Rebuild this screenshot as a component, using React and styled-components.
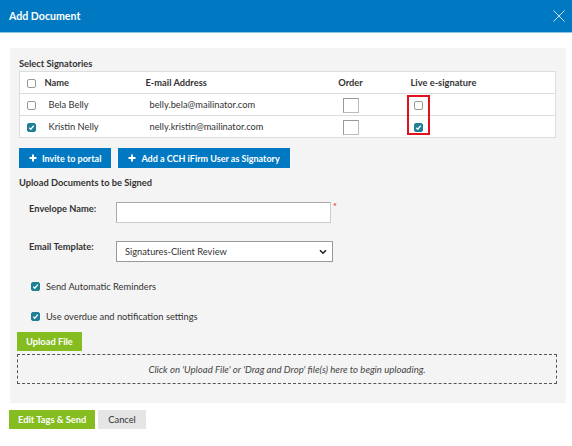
import React from 'react';
import styled, { createGlobalStyle } from 'styled-components';

const GlobalStyle = createGlobalStyle`
	html, body {
		margin: 0;
		padding: 0;
		background: #fff;
		font-family: 'Lato', 'Open Sans', sans-serif;
		font-size: 9.3px;
		color: #333;
	}
`;

const Modal = styled.div`
	width: 572px;
	height: 446px;
	background: #fff;
	overflow: hidden;
`;

const Header = styled.div`
	height: 32px;
	background: #0079c2;
	border-bottom: 1px solid #8cc4e8;
	display: flex;
	align-items: center;
	justify-content: space-between;
	padding: 0 7px 0 9px;
	color: #fff;

	h1 {
		margin: 0;
		font-size: 10.6px;
		font-weight: 700;
	}
`;

const Close = styled.svg`
	width: 12px;
	height: 12px;
	display: block;
`;

const Body = styled.div`
	padding: 15px 6px 0 10px;
`;

const Panel = styled.div`
	background: #f4f4f4;
	padding: 8px 10px 19px 9px;
`;

const SectionTitle = styled.div`
	font-weight: 700;
	color: #333;
	height: 15px;
	line-height: 15px;
`;

const Table = styled.table`
	width: 537px;
	border-collapse: collapse;
	background: #fff;
	border: 1px solid #ddd;
	table-layout: fixed;

	th, td {
		height: 21px;
		line-height: 21px;
		padding: 0;
		box-sizing: border-box;
	}

	th {
		font-weight: 700;
		text-align: left;
		color: #333;
	}

	td {
		border-top: 1px solid #ddd;
	}
`;

const Cell = styled.td`
	padding-left: ${p => p.$pl || 0}px !important;
	text-align: ${p => p.$center ? 'center' : 'left'};
`;

const Head = styled.th`
	padding-left: ${p => p.$pl || 0}px !important;
	text-align: ${p => p.$center ? 'center' : 'left'} !important;
`;

const Check = styled.span`
	display: inline-block;
	vertical-align: middle;
	width: 9px;
	height: 9px;
	box-sizing: border-box;
	border: 1px solid ${p => p.$on ? '#1f7f95' : '#999'};
	border-radius: 2px;
	background: ${p => p.$on ? '#1f7f95' : '#fff'};
	position: relative;

	svg {
		position: absolute;
		left: 0;
		top: 0;
		width: 7px;
		height: 7px;
	}
`;

const OrderBox = styled.span`
	display: inline-block;
	vertical-align: middle;
	width: 16px;
	height: 15px;
	box-sizing: border-box;
	border: 1px solid #999;
	border-bottom-color: #bbb;
	border-right-color: #bbb;
	background: #fff;
`;

const Highlight = styled.div`
	position: absolute;
	left: -7px;
	top: -6px;
	width: 23px;
	height: 40px;
	box-sizing: border-box;
	border: 2px solid #e3111b;
`;

const LiveCell = styled.div`
	position: relative;
	display: inline-block;
	vertical-align: middle;
	line-height: 0;
`;

const ButtonRow = styled.div`
	display: flex;
	gap: 7px;
	margin: 10px 0 7px;
`;

const BlueButton = styled.button`
	height: 20px;
	border: none;
	background: #0079c2;
	color: #fff;
	font-family: inherit;
	font-size: 9px;
	font-weight: 700;
	padding: 0 ${p => p.$px || 12}px;
	display: flex;
	align-items: center;
	gap: 5px;
	border-radius: 0;
`;

const FormRow = styled.div`
	display: flex;
	align-items: flex-start;
	padding-left: 10px;
	margin-top: ${p => p.$mt || 0}px;
`;

const Label = styled.div`
	width: 87px;
	font-weight: 700;
	padding-top: ${p => p.$pt || 0}px;
`;

const TextInput = styled.div`
	width: 215px;
	height: 21px;
	box-sizing: border-box;
	border: 1px solid #aaa;
	border-bottom-color: #ccc;
	border-right-color: #ccc;
	background: #fff;
`;

const Asterisk = styled.span`
	color: #e3111b;
	font-size: 9px;
	margin-left: 2px;
	line-height: 9px;
`;

const SelectBox = styled.div`
	width: 217px;
	height: 21px;
	box-sizing: border-box;
	border: 1px solid #999;
	background: #fff;
	display: flex;
	align-items: center;
	justify-content: space-between;
	padding: 0 5px 0 8px;
	color: #333;
`;

const CheckRow = styled.div`
	display: flex;
	align-items: center;
	gap: 6px;
	padding-left: 12px;
	height: 14px;
	margin-top: ${p => p.$mt || 0}px;
`;

const GreenButton = styled.button`
	height: 19px;
	border: none;
	background: #85bc20;
	color: #fff;
	font-family: inherit;
	font-size: 9.3px;
	font-weight: 700;
	padding: 0 ${p => p.$px || 9}px;
	border-radius: 0;
`;

const GrayButton = styled.button`
	height: 19px;
	border: none;
	background: #e5e5e5;
	color: #333;
	font-family: inherit;
	font-size: 9.3px;
	padding: 0 10px;
	border-radius: 0;
`;

const Upload = styled.div`
	margin: 9px 0 0 -2px;

	> button {
		display: block;
	}
`;

const DropZone = styled.div`
	margin-top: 3px;
	height: 30px;
	width: 540px;
	box-sizing: border-box;
	border: 1px dashed #555;
	display: flex;
	align-items: center;
	justify-content: center;
	font-style: italic;
	color: #444;
	font-size: 9.6px;
`;

const Footer = styled.div`
	display: flex;
	gap: 3px;
	padding: 7px 0 0 9px;
	margin-left: -10px;
`;

const Tick = () => (
	<svg viewBox="0 0 7 7">
		<path d="M1.3 3.8 L2.8 5.2 L5.8 1.6" fill="none" stroke="#fff" strokeWidth="1.3" />
	</svg>
);

const Box = ({ on }) => <Check $on={on}>{on && <Tick />}</Check>;

const Plus = () => (
	<svg width="8" height="8" viewBox="0 0 8 8">
		<path d="M4 0.5 V7.5 M0.5 4 H7.5" stroke="#fff" strokeWidth="2" />
	</svg>
);

const signers = [
	{ name: 'Bela Belly', email: 'belly.bela@mailinator.com', on: false },
	{ name: 'Kristin Nelly', email: 'nelly.kristin@mailinator.com', on: true },
];

export default function App() {
	return (
		<Modal>
			<GlobalStyle />
			<Header>
				<h1>Add Document</h1>
				<Close viewBox="0 0 12 12">
					<path d="M0.5 0.5 L11.5 11.5 M11.5 0.5 L0.5 11.5" stroke="#cfe6f6" strokeWidth="1" />
				</Close>
			</Header>
			<Body>
				<Panel>
					<SectionTitle>Select Signatories</SectionTitle>
					<Table>
						<colgroup>
							<col style={{ width: 21 }} />
							<col style={{ width: 101 }} />
							<col style={{ width: 183 }} />
							<col style={{ width: 52 }} />
							<col />
						</colgroup>
						<thead>
							<tr>
								<Head $pl={7}><Box on={false} /></Head>
								<Head $pl={4}>Name</Head>
								<Head $pl={4}>E-mail Address</Head>
								<Head $center>Order</Head>
								<Head $pl={34}>Live e-signature</Head>
							</tr>
						</thead>
						<tbody>
							{signers.map((s, i) => (
								<tr key={s.name}>
									<Cell $pl={7}><Box on={s.on} /></Cell>
									<Cell $pl={8}>{s.name}</Cell>
									<Cell $pl={8}>{s.email}</Cell>
									<Cell $center><OrderBox /></Cell>
									<Cell $pl={37}>
										<LiveCell>
											{i === 0 && <Highlight />}
											<Box on={s.on} />
										</LiveCell>
									</Cell>
								</tr>
							))}
						</tbody>
					</Table>
					<ButtonRow>
						<BlueButton $px={10}><Plus />Invite to portal</BlueButton>
						<BlueButton $px={10}><Plus />Add a CCH iFirm User as Signatory</BlueButton>
					</ButtonRow>
					<SectionTitle>Upload Documents to be Signed</SectionTitle>
					<FormRow $mt={12}>
						<Label $pt={1}>Envelope Name:</Label>
						<TextInput />
						<Asterisk>*</Asterisk>
					</FormRow>
					<FormRow $mt={18}>
						<Label $pt={0}>Email Template:</Label>
						<SelectBox>
							Signatures-Client Review
							<svg width="8" height="6" viewBox="0 0 8 6">
								<path d="M1 1.2 L4 4.2 L7 1.2" fill="none" stroke="#222" strokeWidth="1.6" />
							</svg>
						</SelectBox>
					</FormRow>
					<CheckRow $mt={17}><Box on />Send Automatic Reminders</CheckRow>
					<CheckRow $mt={16}><Box on />Use overdue and notification settings</CheckRow>
					<Upload>
						<GreenButton>Upload File</GreenButton>
						<DropZone>Click on 'Upload File' or 'Drag and Drop' file(s) here to begin uploading.</DropZone>
					</Upload>
				</Panel>
				<Footer>
					<GreenButton $px={9}>Edit Tags &amp; Send</GreenButton>
					<GrayButton>Cancel</GrayButton>
				</Footer>
			</Body>
		</Modal>
	);
}
